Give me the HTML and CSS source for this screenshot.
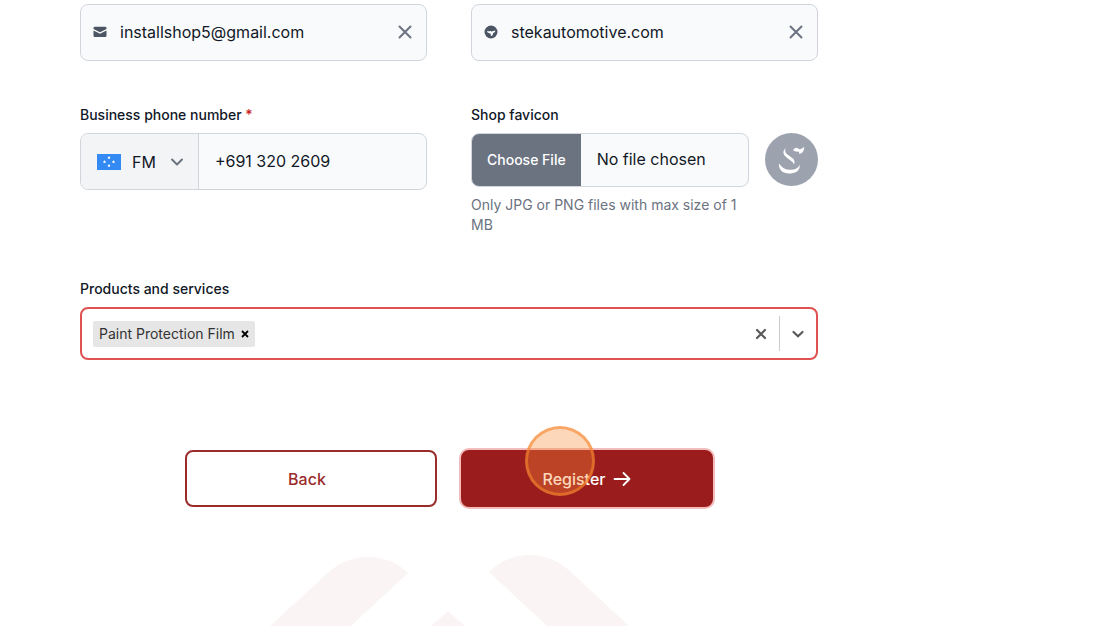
FILE: index.html
```html
<!DOCTYPE html>
<html lang="en">
<head>
<meta charset="utf-8">
<meta name="viewport" content="width=device-width, initial-scale=1">
<title>Register shop</title>
<link rel="stylesheet" href="styles.css">
</head>
<body>
<form class="form">
  <div class="grid">
    <div class="box">
      <svg class="icon" viewBox="0 0 14 14" aria-hidden="true"><path fill="#4b5563" d="M1.800 1.800h10.400q1.300 0 1.300 1.300v.8L7 7.200.5 3.900v-.8q0-1.300 1.300-1.300zM.5 5.400 7 8.700l6.500-3.300v5.300q0 1.300-1.300 1.300H1.800Q.5 12 .5 10.700z"/></svg>
      <input class="field" type="email" aria-label="Email" value="installshop5@gmail.com">
      <button class="clear" type="button" aria-label="Clear email"><svg width="14" height="14" viewBox="0 0 14 14"><path class="stroke" d="M1.500 1.500l11 11M12.500 1.500l-11 11"/></svg></button>
    </div>
    <div class="box">
      <svg class="icon" viewBox="0 0 14 14" aria-hidden="true"><circle cx="7" cy="7" r="6.500" fill="#4b5563"/><path fill="#f9fafb" d="M2.800 5.400q.8 1.200 2.200.9 1.700-.6 2.600.1l3.500-.8q.5.800-.4 1.600l-1.500.7-.6 2.300q-.7 1-1.700.5l-.3-1.900-1.900-.7Q3 7.400 2.800 5.400z"/></svg>
      <input class="field" type="text" aria-label="Website" value="stekautomotive.com">
      <button class="clear" type="button" aria-label="Clear website"><svg width="14" height="14" viewBox="0 0 14 14"><path class="stroke" d="M1.500 1.500l11 11M12.500 1.500l-11 11"/></svg></button>
    </div>
    <div class="group">
      <label class="label" for="phone">Business phone number <span class="required">*</span></label>
      <div class="box phone">
        <button class="country" type="button">
          <svg width="24" height="16" viewBox="0 0 24 16" aria-hidden="true"><path fill="#338af3" d="M0 0h24v16H0z"/><g fill="#fff"><path id="star" d="M12 1.800l.5 1.100 1.200.1-.9.800.3 1.200-1.100-.6-1.100.6.300-1.200-.9-.8 1.200-.1z"/><use href="#star" y="8"/><use href="#star" x="-4.500" y="4.300"/><use href="#star" x="4.500" y="4.300"/></g></svg>
          <span>FM</span>
          <svg class="chevron" width="14" height="14" viewBox="0 0 14 14" aria-hidden="true"><path class="stroke" d="M2 4.500l5 5 5-5"/></svg>
        </button>
        <input class="field" id="phone" type="tel" value="+691 320 2609">
      </div>
    </div>
    <div class="group">
      <label class="label" for="favicon">Shop favicon</label>
      <div class="upload">
        <div class="group picker">
          <input class="file" id="favicon" type="file" accept="image/png,image/jpeg">
          <p class="hint">Only JPG or PNG files with max size of 1 MB</p>
        </div>
        <svg class="avatar" viewBox="0 0 54 54" role="img" aria-label="Shop favicon preview"><circle cx="27" cy="27" r="27" fill="#9ca3af"/><path fill="#fff" d="M21 15Q19.500 19.500 23 22l5.500 4q2.500 2.500 1 6Q29 29.500 26 28l-4-3q-6-4-1-10zM28.500 17.500q3-4 5.500-1.500 2.500 1.500 6-2-.5 7.500-5.500 7l.5-2q-3 .5-6.500-1.500zM14.500 31q4 7 12 6.500 7-.5 9-5.500.5 8-9 9.200-9.500 1-12-6.200-.5-2 0-4z"/></svg>
      </div>
    </div>
  </div>

  <div class="group">
    <label class="label" for="services">Products and services</label>
    <div class="multi">
      <span class="tag">Paint Protection Film
        <button class="mini" type="button" aria-label="Remove Paint Protection Film"><svg width="8" height="8" viewBox="0 0 8 8"><path d="M1 1l6 6M7 1L1 7" stroke="#000" stroke-width="1.800"/></svg></button>
      </span>
      <input class="search" id="services" type="text">
      <button class="mini" type="button" aria-label="Clear all"><svg width="12" height="12" viewBox="0 0 12 12"><path d="M2 2l8 8M10 2l-8 8" stroke="#595959" stroke-width="2.200" stroke-linecap="round"/></svg></button>
      <span class="divider"></span>
      <button class="mini" type="button" aria-label="Open list"><svg width="14" height="14" viewBox="0 0 14 14"><path d="M2.500 5L7 9.300 11.500 5" fill="none" stroke="#595959" stroke-width="2.200" stroke-linecap="round"/></svg></button>
    </div>
  </div>

  <div class="actions">
    <button class="btn" type="button">Back</button>
    <div class="submit">
      <button class="btn primary" type="submit">Register
        <svg width="18" height="16" viewBox="0 0 18 16" aria-hidden="true"><path d="M1.500 8h15M10.500 2l6 6-6 6" fill="none" stroke="#fff" stroke-width="1.800" stroke-linecap="round" stroke-linejoin="round"/></svg>
      </button>
      <span class="pulse"></span>
    </div>
  </div>
</form>
<svg class="watermark" viewBox="0 0 358 71" aria-hidden="true"><path fill="#faf4f4" d="M0 71L60 16Q78 1 100 2 123 3 138 18L81 71zM219 17Q237 0 260 0q22 0 41 17l58 54h-82zM178 56l17 15h-34z"/></svg>
</body>
</html>
```

FILE: styles.css
```css
* { box-sizing: border-box; }
body {
  margin: 0;
  background: #fff;
  color: #111827;
  font: 16px/24px Inter, sans-serif;
  overflow: hidden;
  padding: 4px 80px 0;
}
button, input { font: inherit; color: inherit; }
button { cursor: pointer; }
.form { max-width: 738px; }
.grid {
  display: grid;
  grid-template-columns: repeat(2, minmax(0, 1fr));
  gap: 44px;
  margin-bottom: 44px;
}
.group { display: flex; flex-direction: column; gap: 8px; }
.label { font-size: 14px; line-height: 20px; font-weight: 500; }
.required { color: #c81e1e; }
.box {
  display: flex;
  align-items: center;
  height: 57px;
  padding-bottom: 1px;
  border: 1px solid #d1d5db;
  border-radius: 8px;
  background: #f9fafb;
  overflow: hidden;
}
.phone { padding: 0; }
.icon { flex: none; width: 14px; height: 14px; margin-left: 12px; }
.field {
  flex: 1;
  min-width: 0;
  height: 100%;
  border: 0;
  padding: 0 0 1px 13px;
  background: transparent;
  outline: none;
}
.clear {
  display: flex;
  border: 0;
  padding: 0;
  margin-right: 14px;
  background: none;
}
.stroke { fill: none; stroke: #6b7280; stroke-width: 2; stroke-linecap: round; stroke-linejoin: round; }
.country {
  display: flex;
  align-items: center;
  gap: 11px;
  height: 100%;
  padding: 0 14px 0 16px;
  border: 0;
  border-right: 1px solid #d1d5db;
  background: #f3f4f6;
}
.chevron { margin-left: 3px; }
.phone .field { padding-left: 16px; }
.upload { display: flex; align-items: flex-start; gap: 16px; }
.picker { flex: 1; min-width: 0; }
.file {
  width: 100%;
  height: 54px;
  line-height: 50px;
  border: 1px solid #d1d5db;
  border-radius: 8px;
  background: #f9fafb;
  overflow: hidden;
}
.file::file-selector-button {
  height: 52px;
  margin: 0 16px 0 0;
  padding: 0 15px;
  border: 0;
  background: #6b7280;
  color: #fff;
  font: 500 14px/20px Inter, sans-serif;
}
.avatar { flex: none; width: 53px; height: 53px; }
.hint { margin: 0; font-size: 14px; line-height: 20px; color: #6b7280; }
.multi {
  display: flex;
  align-items: center;
  height: 53px;
  padding: 0 11px;
  border: 2px solid #e05252;
  border-radius: 8px;
}
.tag {
  display: flex;
  align-items: center;
  gap: 6px;
  height: 26px;
  padding: 0 6px;
  border-radius: 2px;
  background: #e6e6e6;
  color: #333;
  font-size: 14px;
}
.mini { display: flex; border: 0; padding: 0; background: none; }
.search { flex: 1; min-width: 0; border: 0; outline: none; background: transparent; }
.divider { width: 1px; height: 35px; margin: 0 11px 0 12px; background: #ccc; }
.actions { display: flex; justify-content: center; gap: 24px; margin-top: 90px; }
.submit { position: relative; }
.btn {
  display: flex;
  align-items: center;
  justify-content: center;
  gap: 8px;
  width: 252px;
  height: 57px;
  padding: 0 12px 0 4px;
  border: 2px solid #9b2c2c;
  border-radius: 8px;
  background: #fff;
  color: #9b2c2c;
  font-weight: 500;
}
.primary {
  padding: 0 6px;
  border-color: #9b1c1c;
  background: #9b1c1c;
  color: #fff;
  box-shadow: 0 0 0 2px #f2bcbc;
}
.pulse {
  position: absolute;
  left: 64px;
  top: -24px;
  width: 70px;
  height: 70px;
  border: 3px solid rgba(245, 133, 45, 0.6);
  border-radius: 50%;
  background: rgba(248, 139, 55, 0.35);
  pointer-events: none;
}
.watermark { display: block; width: 358px; height: 71px; margin: 48px 0 0 190px; }
```
